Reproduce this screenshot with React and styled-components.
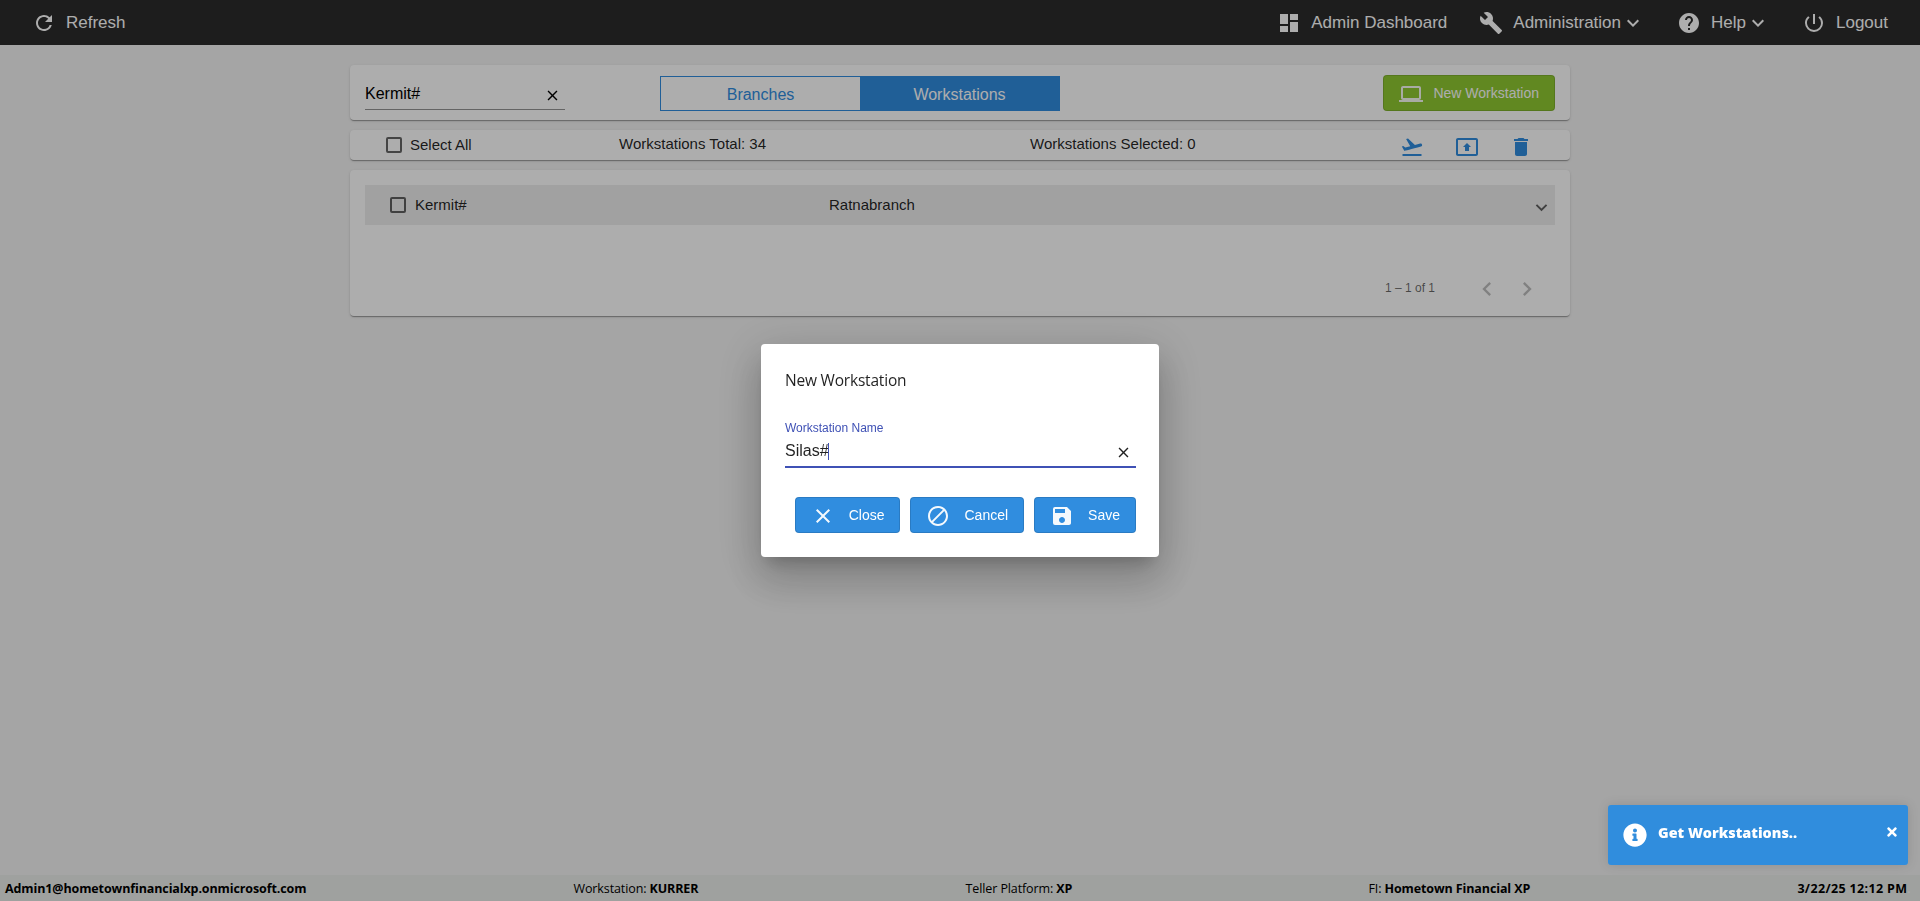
import React, { useState } from 'react';
import styled, { createGlobalStyle } from 'styled-components';
import {
    MdRefresh, MdDashboard, MdBuild, MdHelp, MdPowerSettingsNew, MdExpandMore,
    MdLaptop, MdFlightTakeoff, MdPresentToAll, MdDelete, MdClose, MdSave,
    MdChevronLeft, MdChevronRight, MdBlock
} from 'react-icons/md';
import { FaInfoCircle, FaTimes } from 'react-icons/fa';

const blue = '#308ddf';
const indigo = '#3f51b5';
const arial = '"Liberation Sans", Arial, sans-serif';
const segoe = '"Open Sans", "Noto Sans", sans-serif';

const GlobalStyle = createGlobalStyle`
    * {
        box-sizing: border-box;
    }

    body {
        margin: 0;
        background-color: #f3f3f3;
        color: rgba(0, 0, 0, 0.87);
        font-family: ${arial};
    }

    svg {
        display: block;
        flex: none;
    }
`

const Page = styled.div`
    display: flex;
    flex-direction: column;
    height: 100vh;
`

const Toolbar = styled.header`
    display: flex;
    align-items: center;
    gap: 32px;
    height: 45px;
    padding: 1px 32px 0 32px;
    background-color: #2c2c2c;
    color: white;

    .spacer {
        flex: 1;
    }
`

const NavItem = styled.div`
    display: flex;
    align-items: center;
    gap: 10px;
    font-size: 17px;
    line-height: 20px;

    .label {
        display: flex;
        align-items: center;
    }
`

const Content = styled.main`
    display: flex;
    flex-direction: column;
    flex: 1;
    gap: 10px;
    width: 1220px;
    margin: 20px auto 0 auto;
`

const Card = styled.section`
    height: ${props => props.$height}px;
    background-color: white;
    border-radius: 4px;
    box-shadow: 0 2px 1px -1px rgba(0, 0, 0, 0.2), 0 1px 1px 0 rgba(0, 0, 0, 0.14), 0 1px 3px 0 rgba(0, 0, 0, 0.12);
`

const SearchCard = styled(Card)`
    display: flex;
    align-items: flex-start;
    padding: 10px 15px;
`

const SearchField = styled.div`
    display: flex;
    align-items: center;
    justify-content: space-between;
    width: 200px;
    height: 35px;
    padding: 3px 4px 0 0;
    border-bottom: 1px solid rgba(0, 0, 0, 0.42);
    color: black;
    font-size: 16px;

    svg {
        margin-top: 3px;
    }
`

const Toggle = styled.div`
    display: flex;
    width: 400px;
    height: 35px;
    margin: 1px auto 0 95px;
    border: 1px solid ${blue};
`

const ToggleOption = styled.div`
    flex: 1;
    padding-top: 1px;
    background-color: ${props => props.$active ? blue : 'transparent'};
    color: ${props => props.$active ? 'white' : blue};
    font-size: 16px;
    line-height: 33px;
    text-align: center;
    cursor: pointer;
`

const Button = styled.button`
    display: flex;
    align-items: center;
    gap: ${props => props.$gap || 14}px;
    height: 36px;
    padding: 0 15px;
    background-color: ${props => props.$color || blue};
    border: 1px solid rgba(0, 0, 0, 0.12);
    border-radius: 4px;
    color: white;
    font-family: ${arial};
    font-size: 14px;

    svg {
        margin-top: 2px;
        opacity: 0.95;
    }
`

const SelectCard = styled(Card)`
    display: flex;
    padding-left: 36px;
    font-size: 15px;
    line-height: 17px;

    .select-all {
        display: flex;
        align-items: center;
        gap: 8px;
        width: 233px;
    }

    .select-all label {
        margin-top: -2px;
    }

    .total {
        width: 411px;
        padding-top: 5px;
    }

    .selected {
        width: 370px;
        padding-top: 5px;
    }

    .actions {
        display: flex;
        gap: 30.5px;
        padding-top: 5px;
        color: ${blue};
    }
`

const Checkbox = styled.span`
    width: 16px;
    height: 16px;
    border: 2px solid rgba(0, 0, 0, 0.6);
    border-radius: 2px;
`

const ListCard = styled(Card)`
    padding: 15px;
`

const Row = styled.div`
    display: flex;
    align-items: center;
    height: 40px;
    padding: 0 2px 0 25px;
    background-color: #eeeeee;
    font-size: 15px;

    .name {
        width: 414px;
        margin: -2px 0 0 9px;
    }

    .branch {
        flex: 1;
        margin-top: -2px;
    }

    svg {
        margin-top: 5px;
        color: rgba(0, 0, 0, 0.6);
    }
`

const Paginator = styled.div`
    display: flex;
    align-items: center;
    justify-content: flex-end;
    gap: 12px;
    margin-top: 50px;
    padding-right: 14px;
    color: rgba(0, 0, 0, 0.6);
    font-size: 12px;

    .range {
        margin: -2px 26px 0 0;
    }

    svg {
        color: rgba(0, 0, 0, 0.26);
    }
`

const Footer = styled.footer`
    display: flex;
    justify-content: space-between;
    height: 26px;
    padding: 0 9px 0 5px;
    background-color: #ebeeeb;
    color: black;
    font-family: ${segoe};
    font-size: 12.5px;
    letter-spacing: -0.11px;
    line-height: 27px;
    white-space: nowrap;

    .platform {
        padding-right: 29px;
    }

    .date {
        letter-spacing: 0.35px;
    }

    .dot {
        color: white;
    }
`

const Backdrop = styled.div`
    position: fixed;
    inset: 0;
    display: flex;
    align-items: center;
    justify-content: center;
    background-color: rgba(0, 0, 0, 0.32);
`

const Dialog = styled.div`
    width: 398px;
    height: 213px;
    padding: 24px 23px 24px 24px;
    background-color: white;
    border-radius: 4px;
    box-shadow: 0 11px 15px -7px rgba(0, 0, 0, 0.2), 0 24px 38px 3px rgba(0, 0, 0, 0.14), 0 9px 46px 8px rgba(0, 0, 0, 0.12);

    .title {
        font-family: ${segoe};
        font-size: 15.5px;
        letter-spacing: -0.2px;
        line-height: 25px;
    }

    .buttons {
        display: flex;
        justify-content: flex-end;
        gap: 10px;
        margin-top: 29px;
    }
`

const Field = styled.div`
    width: 351px;
    margin-top: 28px;
    border-bottom: 2px solid ${indigo};

    .label {
        color: ${indigo};
        font-size: 12px;
        line-height: 15px;
    }

    .value {
        display: flex;
        align-items: center;
        height: 30px;
        padding: 0 4px 0 0;
        font-size: 16px;
    }

    .caret {
        flex: 1;
        height: 17px;
        margin-left: -1px;
        border-left: 1px solid ${indigo};
    }

    svg {
        margin-top: 2px;
    }
`

const Toast = styled.div`
    position: fixed;
    right: 12px;
    bottom: 36px;
    display: flex;
    width: 300px;
    height: 60px;
    padding: 18px 9px 0 15px;
    background-color: #308ddd;
    border-radius: 3px;
    box-shadow: 0 0 12px rgba(0, 0, 0, 0.12);
    color: white;
    font-family: ${segoe};

    .message {
        flex: 1;
        margin-left: 11px;
        font-size: 14.4px;
        font-weight: 800;
        line-height: 20px;
    }

    .close {
        margin-top: 2px;
    }
`

function Header() {
    return (
        <Toolbar>
            <NavItem><MdRefresh size={24} /><span className='label'>Refresh</span></NavItem>
            <div className='spacer' />
            <NavItem><MdDashboard size={24} /><span className='label'>Admin Dashboard</span></NavItem>
            <NavItem>
                <MdBuild size={24} />
                <span className='label'>Administration<MdExpandMore size={24} /></span>
            </NavItem>
            <NavItem>
                <MdHelp size={24} />
                <span className='label'>Help<MdExpandMore size={24} /></span>
            </NavItem>
            <NavItem><MdPowerSettingsNew size={24} /><span className='label'>Logout</span></NavItem>
        </Toolbar>
    );
}

function NewWorkstationDialog(props) {
    return (
        <Backdrop>
            <Dialog role='dialog'>
                <div className='title'>New Workstation</div>
                <Field>
                    <div className='label'>Workstation Name</div>
                    <div className='value'>
                        <span>{props.name}</span>
                        <span className='caret' />
                        <MdClose size={17} />
                    </div>
                </Field>
                <div className='buttons'>
                    <Button><MdClose size={24} />Close</Button>
                    <Button><MdBlock size={24} />Cancel</Button>
                    <Button><MdSave size={24} />Save</Button>
                </div>
            </Dialog>
        </Backdrop>
    );
}

function App() {

    const [tab, setTab] = useState('Workstations');

    return (
        <Page>
            <GlobalStyle />
            <Header />
            <Content>
                <SearchCard $height={55}>
                    <SearchField>Kermit#<MdClose size={17} /></SearchField>
                    <Toggle>
                        {['Branches', 'Workstations'].map(option => (
                            <ToggleOption key={option} $active={option === tab} onClick={() => setTab(option)}>
                                {option}
                            </ToggleOption>
                        ))}
                    </Toggle>
                    <Button $color='#90c932' $gap={10}><MdLaptop size={24} />New Workstation</Button>
                </SearchCard>
                <SelectCard $height={30}>
                    <div className='select-all'><Checkbox /><label>Select All</label></div>
                    <div className='total'>Workstations Total: 34</div>
                    <div className='selected'>Workstations Selected: 0</div>
                    <div className='actions'>
                        <MdFlightTakeoff size={24} />
                        <MdPresentToAll size={24} />
                        <MdDelete size={24} />
                    </div>
                </SelectCard>
                <ListCard $height={146}>
                    <Row>
                        <Checkbox />
                        <span className='name'>Kermit#</span>
                        <span className='branch'>Ratnabranch</span>
                        <MdExpandMore size={23} />
                    </Row>
                    <Paginator>
                        <span className='range'>1 – 1 of 1</span>
                        <MdChevronLeft size={28} />
                        <MdChevronRight size={28} />
                    </Paginator>
                </ListCard>
            </Content>
            <Footer>
                <b>Admin1@hometownfinancialxp.onmicrosoft.com</b>
                <span>Workstation: <b>KURRER</b></span>
                <span className='platform'>Teller Platform: <b>XP</b></span>
                <span>FI: <b>Hometown Financial XP</b></span>
                <span className='date'><b>3/22/25 12:12 PM</b><span className='dot'>.</span></span>
            </Footer>
            <NewWorkstationDialog name='Silas#' />
            <Toast>
                <FaInfoCircle size={24} />
                <span className='message'>Get Workstations..</span>
                <FaTimes size={14} className='close' />
            </Toast>
        </Page>
    );
}

export default App;
